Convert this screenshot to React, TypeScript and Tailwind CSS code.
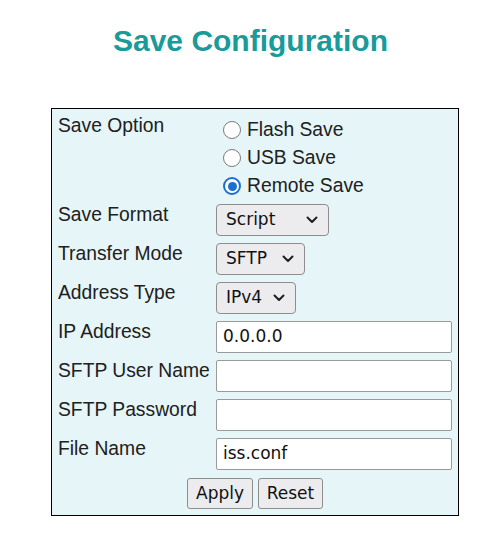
import React from "react";

const labelFont = { fontFamily: '"Liberation Sans", Arial, sans-serif' };
const ctrlFont = { fontFamily: '"DejaVu Sans", Tahoma, sans-serif' };

const Chevron = () => (
  <svg width="12" height="8" viewBox="0 0 12 8" fill="none">
    <path d="M1.5 1.5 L6 6 L10.5 1.5" stroke="#1f1f1f" strokeWidth="2" strokeLinecap="round" strokeLinejoin="round" />
  </svg>
);

const Radio: React.FC<{ checked?: boolean; label: string }> = ({ checked, label }) => (
  <label className="flex h-[28px] shrink-0 items-center gap-[6px] pl-[7px]">
    {checked ? (
      <span className="flex h-[18px] w-[18px] items-center justify-center rounded-full border-[2px] border-[#1a6fd0] bg-white">
        <span className="h-[9px] w-[9px] rounded-full bg-[#1a6fd0]" />
      </span>
    ) : (
      <span className="h-[18px] w-[18px] rounded-full border-[1.5px] border-[#7a7a7a] bg-white" />
    )}
    <span className="text-[19.3px] leading-[22px] text-[#202020]">{label}</span>
  </label>
);

const Select: React.FC<{ value: string; width: string }> = ({ value, width }) => (
  <div
    className={`flex h-[32px] ${width} items-center justify-between rounded-[4px] border border-[#8d8d8d] bg-[#ececef] pl-[9px] pr-[10px] text-[17px] text-[#111]`}
    style={ctrlFont}
  >
    <span>{value}</span>
    <Chevron />
  </div>
);

const TextInput: React.FC<{ value?: string }> = ({ value }) => (
  <div
    className="flex h-[32px] w-[236px] items-center rounded-[2px] border-[1.5px] border-[#9a9a9a] bg-white pl-[6px] text-[17px] text-[#111]"
    style={ctrlFont}
  >
    {value}
  </div>
);

const Row: React.FC<{ label: string; children: React.ReactNode }> = ({ label, children }) => (
  <div className="flex items-start">
    <div className="w-[158px] shrink-0 text-[19.3px] leading-[22px] text-[#202020]">{label}</div>
    <div>{children}</div>
  </div>
);

const Button: React.FC<{ text: string; width: string }> = ({ text, width }) => (
  <button
    className={`h-[31px] ${width} rounded-[3px] border border-[#8d8d8d] bg-[#ececef] text-[17px] text-[#111]`}
    style={ctrlFont}
  >
    {text}
  </button>
);

export default function App() {
  return (
    <div className="h-[537px] w-[501px] bg-white" style={labelFont}>
      <h1 className="pt-[23px] text-center text-[30px] font-bold leading-[36px] text-[#1a9a9a]">
        Save Configuration
      </h1>
      <div className="ml-[51px] mt-[49px] w-[408px] border border-black bg-[#e6f5f8] pb-[6px] pl-[6px] pt-[6px]">
        <div className="flex flex-col gap-[7px]">
          <Row label="Save Option">
            <div className="mt-[1px] flex h-[81px] flex-col">
              <Radio label="Flash Save" />
              <Radio label="USB Save" />
              <Radio checked label="Remote Save" />
            </div>
          </Row>
          <Row label="Save Format">
            <Select value="Script" width="w-[113px]" />
          </Row>
          <Row label="Transfer Mode">
            <Select value="SFTP" width="w-[89px]" />
          </Row>
          <Row label="Address Type">
            <Select value="IPv4" width="w-[80px]" />
          </Row>
          <Row label="IP Address">
            <TextInput value="0.0.0.0" />
          </Row>
          <Row label="SFTP User Name">
            <TextInput />
          </Row>
          <Row label="SFTP Password">
            <TextInput />
          </Row>
          <Row label="File Name">
            <TextInput value="iss.conf" />
          </Row>
          <div className="mt-[1px] flex justify-center gap-[5px] pr-[6px]">
            <Button text="Apply" width="w-[66px]" />
            <Button text="Reset" width="w-[65px]" />
          </div>
        </div>
      </div>
    </div>
  );
}
